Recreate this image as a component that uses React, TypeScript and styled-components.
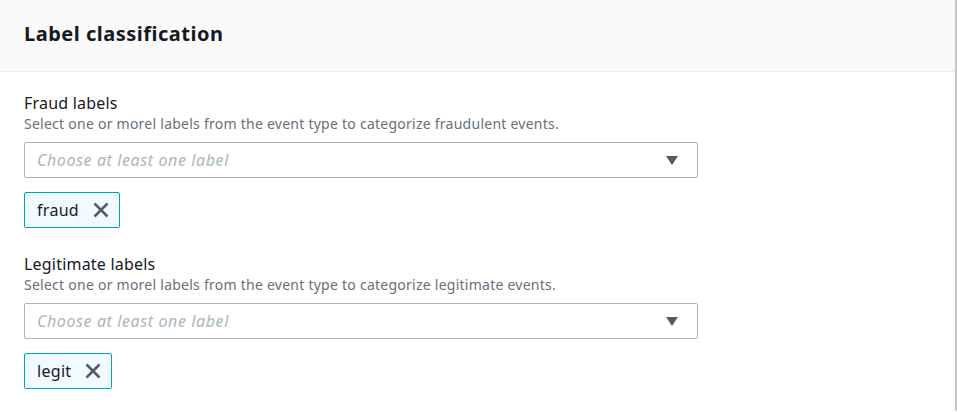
import React from "react";
import styled, { createGlobalStyle } from "styled-components";

const Global = createGlobalStyle`
  html, body { margin: 0; padding: 0; background: #ffffff; }
  body { font-family: "Noto Sans", "Open Sans", sans-serif; color: #16191f; }
  * { box-sizing: border-box; }
`;

const Panel = styled.section`
  width: 957px;
  height: 411px;
  border-right: 2px solid #c6c6c6;
  border-bottom-right-radius: 2px;
  background: #ffffff;
  display: flex;
  flex-direction: column;
`;

const Header = styled.header`
  height: 72px;
  background: #fafafa;
  border-bottom: 1px solid #eaeded;
  display: flex;
  align-items: center;
  padding: 0 24px 3px;
`;

const Title = styled.h2`
  margin: 0;
  font-size: 20px;
  font-weight: 700;
  line-height: 24px;
  letter-spacing: 0.5px;
  color: #16191f;
`;

const Body = styled.div`
  padding: 20px 24px 0;
  display: flex;
  flex-direction: column;
  gap: 25px;
`;

const Field = styled.div`
  display: flex;
  flex-direction: column;
`;

const Label = styled.div`
  font-size: 16px;
  line-height: 22px;
  letter-spacing: 0.2px;
  color: #16191f;
`;

const Description = styled.div`
  font-size: 14px;
  line-height: 20px;
  letter-spacing: 0.25px;
  color: #687078;
  margin-bottom: 8px;
`;

const Select = styled.div`
  width: 674px;
  height: 36px;
  border: 1px solid #aab7b8;
  border-radius: 2px;
  display: flex;
  align-items: center;
  justify-content: space-between;
  padding: 0 19px 0 12px;
`;

const Placeholder = styled.span`
  font-size: 16px;
  font-style: italic;
  letter-spacing: 0.6px;
  color: #aab7b8;
`;

const Caret = styled.svg`
  width: 12px;
  height: 9px;
  fill: #545b64;
`;

const Tokens = styled.div`
  display: flex;
  gap: 8px;
  margin-top: 14px;
`;

const Token = styled.div`
  height: 36px;
  border: 1px solid #00a1c9;
  border-radius: 2px;
  background: #f1faff;
  display: flex;
  align-items: center;
  padding: 0 10px 0 12px;
  gap: 14px;
  font-size: 16px;
  letter-spacing: 0.3px;
  color: #16191f;
`;

const Dismiss = styled.svg`
  width: 16px;
  height: 16px;
  stroke: #545b64;
  stroke-width: 2.5;
  fill: none;
`;

const fields = [
  {
    label: "Fraud labels",
    description:
      "Select one or morel labels from the event type to categorize fraudulent events.",
    tokens: ["fraud"],
  },
  {
    label: "Legitimate labels",
    description:
      "Select one or morel labels from the event type to categorize legitimate events.",
    tokens: ["legit"],
  },
];

export default function App() {
  return (
    <>
      <Global />
      <Panel>
        <Header>
          <Title>Label classification</Title>
        </Header>
        <Body>
          {fields.map((f) => (
            <Field key={f.label}>
              <Label>{f.label}</Label>
              <Description>{f.description}</Description>
              <Select>
                <Placeholder>Choose at least one label</Placeholder>
                <Caret viewBox="0 0 12 9">
                  <polygon points="0,0 12,0 6,9" />
                </Caret>
              </Select>
              <Tokens>
                {f.tokens.map((t) => (
                  <Token key={t}>
                    {t}
                    <Dismiss viewBox="0 0 16 16">
                      <path d="M1.5 1.5 L14.5 14.5 M14.5 1.5 L1.5 14.5" />
                    </Dismiss>
                  </Token>
                ))}
              </Tokens>
            </Field>
          ))}
        </Body>
      </Panel>
    </>
  );
}
